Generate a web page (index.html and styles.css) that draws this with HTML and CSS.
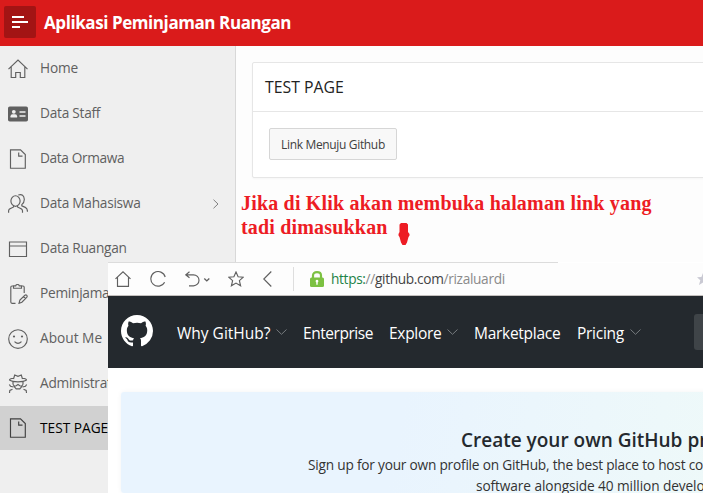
FILE: index.html
```html
<!DOCTYPE html>
<html lang="id">
<head>
<meta charset="utf-8">
<title>Aplikasi Peminjaman Ruangan</title>
<link rel="stylesheet" href="styles.css">
</head>
<body>
<header class="topbar">
  <button class="menu-btn" aria-label="Menu"><svg width="32" height="32" viewBox="0 0 32 32"><path d="M8 11h12M8 16h16M8 21h8" stroke="#fff" stroke-width="2"/></svg></button>
  <span class="brand">Aplikasi Peminjaman Ruangan</span>
</header>
<div class="app">
  <nav class="sidebar">
    <a class="item"><svg class="ico" viewBox="0 0 20 20"><path d="M.5 10.200 10 1l9.500 9.200M3.200 8v10.500h4.500v-5h4.600v5h4.500V8"/></svg><span class="w-home">Home</span></a>
    <a class="item"><svg class="ico" viewBox="0 0 20 20"><rect x="0" y="2.500" width="20" height="15" rx="1.800" fill="#606060" stroke="none"/><circle cx="5.800" cy="7.800" r="1.900" fill="#efefef" stroke="none"/><path d="M2.500 13.500v-1.200q0-2 2-2h2.600q2 0 2 2v1.200z" fill="#efefef" stroke="none"/><path d="M11.500 8h6M11.500 12h6" stroke="#efefef" stroke-width="1.300"/></svg><span>Data Staff</span></a>
    <a class="item"><svg class="ico" viewBox="0 0 20 20"><path d="M2.500.8h10l4.800 4.700v13.700H2.500zM10.700 3.500v3.600h3.800"/></svg><span class="w-orm">Data Ormawa</span></a>
    <a class="item"><svg class="ico" viewBox="0 0 20 20"><ellipse cx="7.500" cy="7" rx="4.600" ry="5.300"/><path d="M.6 18.700v-2q0-1.500 2-2.300l3-1.400v-1.300M14.500 18.700v-2q0-1.500-2-2.300l-3-1.400v-1.300M10.300 1q5.500-1.500 6 4.200.1 3.300-2.500 5.400v1.300l3.500 1.500q2.200 1 2.200 4.300"/></svg><span>Data Mahasiswa</span><svg class="chev" viewBox="0 0 8 10"><path d="M1.500.7 6 5 1.500 9.300"/></svg></a>
    <a class="item"><svg class="ico" viewBox="0 0 20 20"><path d="M1.500 3h17v14.500h-17zM1.500 7h17"/></svg><span>Data Ruangan</span></a>
    <a class="item"><svg class="ico" viewBox="0 0 20 20"><path d="M7.500 19.300H4q-1.200 0-1.200-1.200V3.200Q2.800 2 4 2h1.500M13.500 2H15q1.200 0 1.200 1.200V9M5.500 1.800h2.200Q8 .5 9.500.5t1.800 1.300h2.200v2.400h-8zM11 19.300l.9-3.200 5-4.800q1-.8 1.900.1.800 1-.1 1.900l-4.800 4.900zM15.700 12.700l1.800 1.800"/></svg><span>Peminjaman</span></a>
    <a class="item"><svg class="ico" viewBox="0 0 20 20"><circle cx="10" cy="10" r="9.300"/><path d="M6.500 12.700q3.500 3.300 7 0"/><circle cx="6" cy="7.500" r="1.100" fill="#606060" stroke="none"/><circle cx="14" cy="7.500" r="1.100" fill="#606060" stroke="none"/></svg><span class="w-abt">About Me</span></a>
    <a class="item"><svg class="ico" viewBox="0 0 20 20"><path d="M5.500 5 6.700 1 10 2.400 13.300 1l1.200 4M5.500 4.300Q1.500 4.800 1.500 6 4 7.800 10 7.800T18.500 6q0-1.200-4-1.700M5 8v2q.5 2.500 3.200 1.800L10 10.500l1.800 1.300Q14.500 12.500 15 10V8M6 12.300l2.200 2.600h3.600l2.200-2.600M1.300 10.500l1.200 1.700 3 .8M18.700 10.500l-1.200 1.700-3 .8M1.500 19l.3-2.500 2.700-1.300M18.500 19l-.3-2.500-2.700-1.300"/></svg><span>Administrator</span></a>
    <a class="item active"><svg class="ico" viewBox="0 0 20 20"><path d="M2.500.8h10l4.800 4.700v13.700H2.500zM10.700 3.500v3.600h3.800"/></svg><span>TEST PAGE</span></a>
  </nav>
  <main class="content">
    <section class="region">
      <h2 class="region-head">TEST PAGE</h2>
      <div class="region-body"><button class="btn">Link Menuju Github</button></div>
    </section>
  </main>
</div>

<p class="note">Jika di Klik akan membuka halaman link yang<br>tadi dimasukkan</p>
<svg class="note-arrow" width="12" height="23" viewBox="0 0 12 23"><path d="M3 0h5.500L10 1.500V9l1.500 2v1.500L10.500 14 9 19.500 7.500 22h-3L3 19.500 1.500 14 .5 12.500V11L1.500 9V1.500z" fill="#ed1c24"/></svg>

<div class="browser">
  <div class="top-edge"></div>
  <div class="addressbar">
    <div class="tools">
      <svg width="16" height="16" viewBox="0 0 16 16"><path d="M.5 7.800 8 .8l7.500 7M2.500 6v9.300h11V6"/></svg>
      <svg class="t-reload" width="16" height="16" viewBox="0 0 16 16"><path d="M14.600 11.300A7.300 7.300 0 1 1 15.200 6"/></svg>
      <svg class="t-undo" width="25" height="16" viewBox="0 0 25 16"><path d="M4.500.8.800 3.800l3.700 3M1 3.800h7.500a5.500 5.500 0 0 1 0 11H4"/><path d="m19.300 7.500 2.500 2.400 2.500-2.400" stroke-width="1.400"/></svg>
      <svg class="t-star" width="16" height="16" viewBox="0 0 16 16"><path d="m8 1 2.100 4.700 5.200.5-3.900 3.400 1.200 5.200L8 12.100l-4.600 2.700 1.200-5.200L.7 6.200l5.200-.5z"/></svg>
      <svg class="t-back" width="9" height="16" viewBox="0 0 9 16"><path d="M8.300.5.8 8l7.500 7.500"/></svg>
    </div>
    <span class="sep"></span>
    <svg class="lock" width="14" height="16" viewBox="0 0 14 16"><path d="M3 8V4.500Q3 1.200 7 1.200t4 3.300V8" fill="none" stroke="#7cc142" stroke-width="2.200"/><rect x="0" y="6.500" width="14" height="9.500" rx="1.500" fill="#7cc142"/><path d="M7 8.800a1.400 1.400 0 0 1 .7 2.600v2.300H6.300v-2.300A1.400 1.400 0 0 1 7 8.800z" fill="#fff"/></svg>
    <span class="url"><span class="scheme">https:</span><span class="dim">//</span>github.com<span class="dim">/rizaluardi</span></span>
    <svg class="fav" width="6" height="12" viewBox="0 0 6 12"><path d="m6 0-1.600 4L0 4.300l3.300 2.900L2 12l4-2.500z" fill="#c9c9d3"/></svg>
  </div>
  <div class="gh-nav">
    <svg class="mark" width="32" height="32" viewBox="0 0 16 16"><path fill="#fff" fill-rule="evenodd" d="M8 0C3.580 0 0 3.580 0 8c0 3.540 2.290 6.530 5.470 7.590.4.070.55-.17.55-.38 0-.19-.01-.82-.01-1.490-2.010.37-2.530-.49-2.690-.94-.09-.23-.48-.94-.82-1.130-.28-.15-.68-.52-.01-.53.63-.01 1.080.58 1.230.82.72 1.210 1.870.87 2.330.66.070-.52.28-.87.51-1.070-1.780-.2-3.640-.89-3.640-3.950 0-.87.31-1.590.82-2.150-.08-.2-.36-1.020.08-2.120 0 0 .67-.21 2.200.82.64-.18 1.320-.27 2-.27s1.360.09 2 .27c1.530-1.040 2.200-.82 2.200-.82.44 1.100.16 1.920.08 2.120.51.56.82 1.270.82 2.150 0 3.070-1.870 3.750-3.650 3.950.29.25.54.73.54 1.480 0 1.070-.01 1.930-.01 2.200 0 .21.15.46.55.38A8.010 8.010 0 0 0 16 8c0-4.420-3.580-8-8-8z"/></svg>
    <a class="n-why">Why GitHub?</a><svg class="down" viewBox="0 0 11 6"><path d="m.5.5 5 4.800 5-4.800"/></svg>
    <a class="n-ent">Enterprise</a>
    <a class="n-exp">Explore</a><svg class="down" viewBox="0 0 11 6"><path d="m.5.5 5 4.800 5-4.800"/></svg>
    <a class="n-mkt">Marketplace</a>
    <a class="n-pri">Pricing</a><svg class="down" viewBox="0 0 11 6"><path d="m.5.5 5 4.800 5-4.800"/></svg>
    <span class="search"></span>
  </div>
  <div class="gh-page">
    <div class="banner">
      <h1>Create your own GitHub profile</h1>
      <p class="l1">Sign up for your own profile on GitHub, the best place to host code,</p>
      <p class="l2">software alongside 40 million developers.</p>
    </div>
  </div>
</div>
</body>
</html>
```

FILE: styles.css
```css
* { box-sizing: border-box; }
body { margin: 0; width: 703px; height: 493px; overflow: hidden; position: relative; background: #fdfdfd; font-family: "Open Sans", "Noto Sans", sans-serif; }
button { font-family: inherit; }
h1, h2, p { margin: 0; }
span, a { white-space: nowrap; }

.topbar { height: 46px; background: #da1b1b; display: flex; align-items: center; padding: 0 4px 2px; }
.menu-btn { width: 32px; height: 32px; padding: 0; border: 0; border-radius: 2px; background: #a31414; }
.menu-btn svg { display: block; }
.brand { margin-left: 8px; color: #fff; font-size: 17px; font-weight: 700; letter-spacing: -0.420px; }

.app { display: flex; height: 447px; }
.sidebar { width: 236px; background: #efefef; border-right: 1px solid #d8d8d8; flex: none; }
.item { height: 45px; display: flex; align-items: center; padding: 0 15px 0 8px; font-size: 13.700px; letter-spacing: -0.260px; color: #606060; }
.item span { margin-bottom: 2px; }
.item.active { height: 44px; background: #d1d1d1; color: #000; letter-spacing: 0; }
.item .w-home { letter-spacing: -0.200px; }
.item .w-orm { letter-spacing: -0.370px; }
.item .w-abt { letter-spacing: 0; }
.ico { width: 20px; height: 20px; margin-right: 12px; flex: none; fill: none; stroke: #606060; stroke-width: 1.150; }
.active .ico { stroke: #404040; }
.chev { width: 8px; height: 10px; margin-left: auto; fill: none; stroke: #808080; }

.content { flex: 1; padding: 16px 0 0 16px; }
.region { width: 470px; border: 1px solid #e6e6e6; border-radius: 2px; background: #fff; box-shadow: 0 1px 2px rgba(0,0,0,.03); }
.region-head { height: 49px; padding-left: 12px; line-height: 49px; font-size: 15.800px; font-weight: 400; color: #222; border-bottom: 1px solid #e6e6e6; }
.region-body { height: 65px; padding: 16px; }
.btn { display: block; width: 128px; height: 32px; padding: 0; border: 1px solid #d6d6d6; border-radius: 2px; background: #f8f8f8; color: #404040; font-size: 12px; letter-spacing: -0.340px; white-space: nowrap; }

.note { position: absolute; left: 241px; top: 191px; color: #ed1c24; font: bold 20px/24px "Liberation Serif", serif; letter-spacing: .180px; white-space: nowrap; }
.note-arrow { position: absolute; left: 398px; top: 223px; }

.browser { position: absolute; left: 108px; top: 262px; width: 595px; height: 231px; background: #fff; overflow: hidden; }
.top-edge { width: 450px; height: 1px; background: #dcdcdc; }
.addressbar { height: 33px; display: flex; align-items: center; padding-left: 7px; background: #fdfdfd; border-bottom: 1px solid #c4c0be; }
.tools { display: flex; align-items: center; width: 178px; }
.tools svg { fill: none; stroke: #606060; stroke-width: 1.150; flex: none; }
.t-reload { margin-left: 19px; }
.t-undo { margin-left: 19px; }
.t-star { margin-left: 18px; }
.t-back { margin-left: 19px; }
.sep { width: 1px; height: 24px; background: #dedede; }
.lock { margin-left: 16px; }
.url { margin: 0 0 1px 7px; color: #444; font-size: 13.700px; letter-spacing: -0.340px; }
.scheme { color: #1d8348; }
.dim { color: #8a8a8a; }
.fav { margin-left: auto; }

.gh-nav { height: 72px; background: #24292e; display: flex; align-items: center; padding-left: 13px; color: #fff; font-size: 15.500px; letter-spacing: -0.280px; }
.mark { flex: none; margin: -2px 24px 0 0; }
.gh-nav a { flex: none; margin-top: 1px; }
.down { width: 11px; height: 6px; margin-left: 5px; fill: none; stroke: #777b7f; stroke-width: 1; flex: none; }
.n-why { width: 94px; letter-spacing: 0; }
.n-ent { margin-left: 16px; width: 70px; letter-spacing: -0.450px; }
.n-exp { margin-left: 16px; width: 53px; }
.n-mkt { margin-left: 16px; width: 87px; }
.n-pri { margin-left: 16px; width: 48px; }
.search { margin-left: auto; width: 9px; height: 36px; border-radius: 3px 0 0 3px; background: #3f4448; flex: none; }

.gh-page { padding: 24px 0 0 13px; }
.banner { width: 900px; height: 101px; padding-top: 34px; border-radius: 3px; overflow: hidden; background: linear-gradient(100deg, #e9f4fe 0, #e9f4fe 280px, #eef9f9 600px); box-shadow: 0 0 5px rgba(0,0,0,.05); color: #333; }
.banner h1 { padding-left: 340px; font-size: 19px; line-height: 28px; font-weight: 600; color: #24292e; white-space: nowrap; }
.banner p { font-size: 13.700px; line-height: 21px; letter-spacing: -0.220px; white-space: nowrap; }
.banner .l1 { padding-left: 187px; }
.banner .l2 { padding-left: 355px; letter-spacing: -0.100px; }
```
